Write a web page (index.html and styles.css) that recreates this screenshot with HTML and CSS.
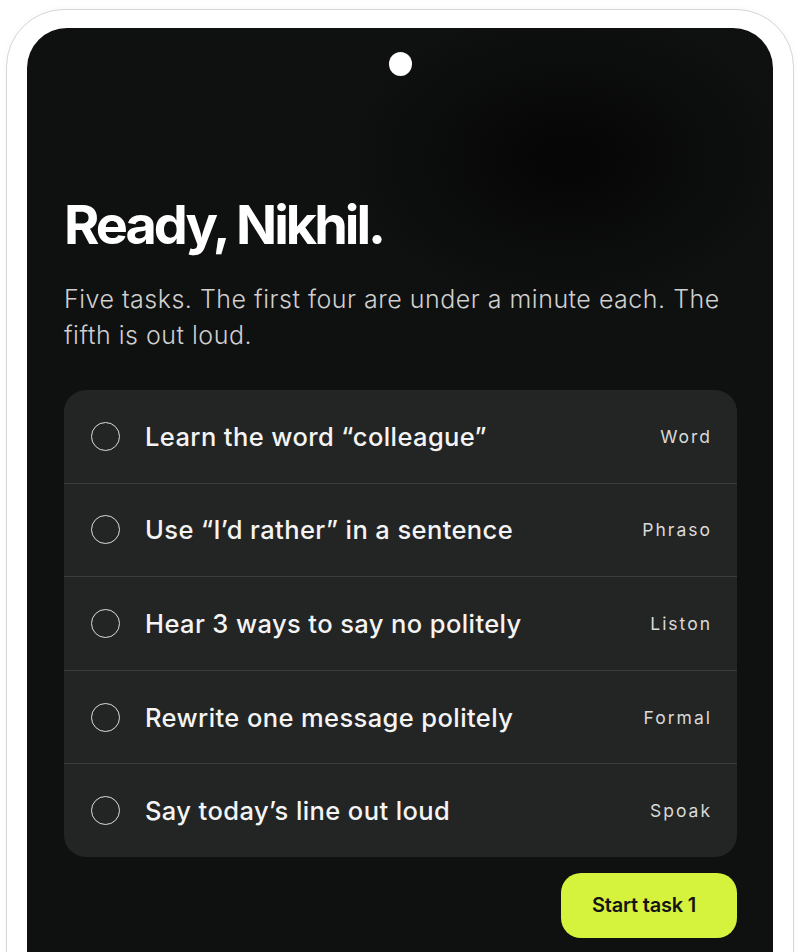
FILE: index.html
```html
<!DOCTYPE html>
<html lang="en">
<head>
    <meta charset="UTF-8" />
    <meta name="viewport" content="width=device-width, initial-scale=1.0" />
    <title>Ready, Nikhil.</title>
    <link rel="stylesheet" href="styles.css">
</head>
<body>
    <div class="phone">
        <div class="screen">
            <div class="camera"></div>
            <h1 class="title">Ready, Nikhil.</h1>
            <p class="intro">Five tasks. The first four are under a minute each. The fifth is out loud.</p>
            <div class="task-list">
                <div class="task">
                    <span class="check"></span>
                    <span class="task-name">Learn the word “colleague”</span>
                    <span class="task-tag">Word</span>
                </div>
                <div class="task">
                    <span class="check"></span>
                    <span class="task-name">Use “I’d rather” in a sentence</span>
                    <span class="task-tag">Phraso</span>
                </div>
                <div class="task">
                    <span class="check"></span>
                    <span class="task-name">Hear 3 ways to say no politely</span>
                    <span class="task-tag">Liston</span>
                </div>
                <div class="task">
                    <span class="check"></span>
                    <span class="task-name">Rewrite one message politely</span>
                    <span class="task-tag">Formal</span>
                </div>
                <div class="task">
                    <span class="check"></span>
                    <span class="task-name">Say today’s line out loud</span>
                    <span class="task-tag">Spoak</span>
                </div>
            </div>
            <div class="actions">
                <button class="start-btn">Start task 1</button>
            </div>
        </div>
    </div>
</body>
</html>
```

FILE: styles.css
```css
/* phone mockup with daily task list */
html, body {
    margin: 0;
    padding: 0;
    height: 952px;
    overflow: hidden;
    background-color: #ffffff;
    font-family: 'Inter', 'Noto Sans', sans-serif;
}
.phone {
    margin: 9px 12px 0 6px;
    padding: 18px 20px 0 20px;
    height: 1000px;
    border: 1px solid #d6d6d6;
    border-radius: 58px;
    background: #ffffff;
    box-shadow: 0 0 6px rgba(0, 0, 0, 0.04);
}
.screen {
    height: 1000px;
    padding: 24px 36px 0 37px;
    border-radius: 40px;
    background-color: #0f1010;
    background-image: radial-gradient(ellipse 220px 150px at 540px 130px, #050505 0%, rgba(5, 5, 5, 0) 100%);
    box-sizing: border-box;
}
.camera {
    width: 23px;
    height: 24px;
    margin: 0 auto;
    border-radius: 50%;
    background: #ffffff;
}
.title {
    margin: 114px 0 0 0;
    color: #ffffff;
    font-size: 54px;
    font-weight: 700;
    letter-spacing: -3px;
    line-height: 70px;
}
.intro {
    margin: 21px 0 0 0;
    color: #cfcfcf;
    font-size: 25px;
    font-weight: 300;
    line-height: 36px;
    letter-spacing: 0.5px;
}
.task-list {
    margin-top: 37px;
    background: #232524;
    border-radius: 22px;
    overflow: hidden;
}
.task {
    display: flex;
    align-items: center;
    height: 92.6px;
    padding: 0 25px 0 27px;
    border-top: 1px solid #3b3d3c;
}
.task:first-child {
    border-top: none;
}
.check {
    flex: none;
    width: 27px;
    height: 27px;
    border: 1.5px solid #dedcd6;
    border-radius: 50%;
}
.task-name {
    flex: 1;
    margin-left: 25px;
    color: #f4f4f4;
    font-size: 25.5px;
    font-weight: 500;
    letter-spacing: 0.4px;
}
.task-tag {
    color: #dadada;
    font-size: 17.5px;
    letter-spacing: 2px;
}
.actions {
    display: flex;
    justify-content: flex-end;
    margin-top: 16px;
}
.start-btn {
    width: 176px;
    height: 65px;
    padding: 0 10px 0 0;
    border: none;
    border-radius: 20px;
    background-color: #d5f23d;
    color: #141414;
    font-family: 'Inter', sans-serif;
    font-size: 20px;
    font-weight: 600;
    letter-spacing: -0.2px;
    cursor: pointer;
}
```
